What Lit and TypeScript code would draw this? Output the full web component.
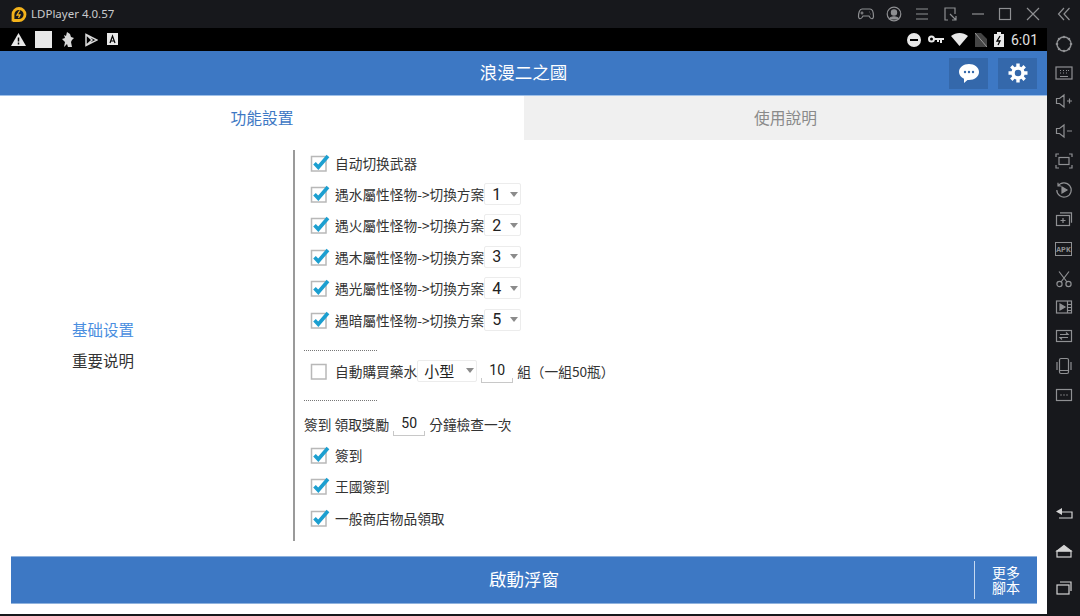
import { LitElement, html, css, svg } from "lit";
import { customElement } from "lit/decorators.js";

const ic = (body: unknown, w = 18, h = 18, vb = "0 0 18 18") =>
  html`<svg width=${w} height=${h} viewBox=${vb} fill="none" stroke="currentColor" stroke-width="1.2">${body}</svg>`;

const CHECK = html`<svg class="cb" width="24" height="20" viewBox="0 0 24 20">
  <rect x="1.500" y="3.500" width="14.500" height="14.500" fill="#fff" stroke="#b8b8b8" stroke-width="1.500" />
  <path d="M4.500 10.200l3.800 4L18 3" fill="none" stroke="#1c9fd0" stroke-width="3.600" />
</svg>`;
const UNCHECK = html`<svg class="cb" width="24" height="20" viewBox="0 0 24 20">
  <rect x="1.500" y="3.500" width="14.500" height="14.500" fill="#fff" stroke="#b8b8b8" stroke-width="1.500" />
</svg>`;

const sideIcons = [
  [31, ic(svg`<circle cx="9" cy="9" r="7" stroke-width="1.400"/><g fill="currentColor" stroke="none"><circle cx="9" cy="2" r="1.300"/><circle cx="9" cy="16" r="1.300"/><circle cx="2" cy="9" r="1.300"/><circle cx="16" cy="9" r="1.300"/><circle cx="4.050" cy="4.050" r="1.300"/><circle cx="13.950" cy="4.050" r="1.300"/><circle cx="4.050" cy="13.950" r="1.300"/><circle cx="13.950" cy="13.950" r="1.300"/></g>`)],
  [27, ic(svg`<rect x="1" y="3" width="16" height="12"/><path d="M5 6.500h1M8 6.500h1M11 6.500h1M14 6.500h-1M5 9h1M8 9h1M11 9h1M5 12.500h8"/>`)],
  [30, ic(svg`<path d="M1.500 6.500h3L9 3v12l-4.500-3.500h-3zM12 9h5M14.500 6.500v5"/>`)],
  [30, ic(svg`<path d="M1.500 6.500h3L9 3v12l-4.500-3.500h-3zM12 9h5"/>`)],
  [29, ic(svg`<rect x="4" y="5.500" width="10" height="7"/><path d="M1 5V2h3M14 2h3v3M1 13v3h3M14 16h3v-3"/>`)],
  [30, ic(svg`<path d="M3 5a7.200 7.200 0 1 1-1.200 4M3 1.800V5h3.200"/><path d="M7 6l5 3-5 3z" fill="currentColor"/>`)],
  [29, ic(svg`<rect x="1.500" y="4.500" width="13" height="10"/><path d="M5 1.800h11.500v10M8 7v5M5.500 9.500h5"/>`)],
  [30, html`<span class="apk">APK</span>`],
  [29, ic(svg`<circle cx="4.500" cy="14" r="2.600"/><circle cx="13.500" cy="14" r="2.600"/><path d="M6 12L14 1.500M12 12L4 1.500"/>`)],
  [28, ic(svg`<rect x="1.500" y="3" width="15" height="12"/><path d="M12.500 3v12M12.500 6.500h4M12.500 9.500h4M12.500 12.500h4"/><path d="M5 6l5 3-5 3z" fill="currentColor"/>`)],
  [30, ic(svg`<rect x="1.500" y="3.500" width="15" height="11"/><path d="M5 7.500h8l-2-2M13 10.500H5l2 2"/>`)],
  [29, ic(svg`<rect x="4.500" y="1.500" width="9" height="15" rx="1.500"/><path d="M2 5v8M16 5v8M4.500 13.500h9"/>`)],
  [30, ic(svg`<rect x="1.500" y="3.500" width="15" height="11"/><path d="M5.500 9h1M8.500 9h1M11.500 9h1" stroke-width="1.500"/>`)],
];

@customElement("app-root")
export class AppRoot extends LitElement {
  static styles = css`
    :host { display: block; width: 1080px; height: 616px; overflow: hidden; background: #17181c; font-family: "Noto Sans CJK TC", "Noto Sans", sans-serif; }
    * { box-sizing: border-box; }
    .title { height: 28px; display: flex; align-items: center; padding-left: 10px; color: #c9cacc; font: 11.500px/28px "Noto Sans", sans-serif; }
    .logo { margin-right: 4px; }
    .tools { margin-left: auto; display: flex; align-items: center; color: #8e8f92; }
    .tools span { width: 27.800px; display: flex; justify-content: center; }
    .tools .collapse { width: 33px; }
    .main { display: flex; height: 588px; }
    .screen { width: 1047px; display: flex; flex-direction: column; background: #fff; height: 586px; }
    .status { height: 23px; background: #000; display: flex; align-items: center; padding: 0 9px 0 11px; color: #e8e8e8; gap: 9px; flex: none; }
    .status .time { font: 14px "Roboto", sans-serif; color: #e2e2e2; }
    .status .right { margin-left: auto; display: flex; align-items: center; gap: 7px; }
    .square { width: 17px; height: 17px; background: #e8e8e8; }
    .appbar { height: 44px; flex: none; background: #3d78c4; position: relative; display: flex; align-items: center; justify-content: flex-end; gap: 10px; padding-right: 10px; color: #fff; }
    .appbar .name { position: absolute; left: 0; right: 0; text-align: center; font-size: 17.500px; line-height: 42px; top: 0; }
    .iconbtn { width: 39px; height: 31px; background: #3468ab; display: flex; align-items: center; justify-content: center; position: relative; }
    .tabs { display: flex; height: 45px; flex: none; border-top: 1px solid #9fc0e8; font-size: 15.750px; line-height: 44px; text-align: center; }
    .tab { flex: none; width: 524px; color: #3d78c4; background: #fff; }
    .tab.off { flex: 1; color: #8a8a8a; background: #f0f0f0; }
    .content { flex: 1; display: flex; min-height: 0; padding-top: 10px; }
    .nav { width: 293px; flex: none; display: flex; flex-direction: column; justify-content: center; padding: 0 0 2px 72px; font-size: 15.500px; gap: 9px; color: #333; line-height: 22px; height: 391px; }
    .nav .on { color: #4a8ee0; }
    .panel { width: 500px; height: 391px; border-left: 2px solid #9a9a9a; overflow: hidden; padding-left: 9px; font-size: 13.700px; color: #333; }
    .rows { margin-top: -3px; }
    .row { height: 31.400px; display: flex; align-items: center; white-space: nowrap; }
    .cb { flex: none; margin-left: 6px; margin-right: 1px; }
    .sel { display: inline-flex; align-items: center; justify-content: space-between; width: 37px; height: 22px; border: 1px solid #ececec; border-radius: 2px; padding: 0 2px 0 7px; font: 16px "Roboto", sans-serif; color: #222; }
    .sel.wide { width: 60px; font: 15px "Noto Sans CJK TC", sans-serif; padding-left: 6px; }
    .arrow { width: 0; height: 0; border: 4px solid transparent; border-top: 5px solid #8b8b8b; border-bottom: 0; }
    .num { display: inline-block; width: 32px; height: 24px; text-align: center; font: 14px/22px "Roboto", sans-serif; color: #222; margin: 0 4px;
      border-bottom: 1px solid #c8c8c8;
      background: linear-gradient(#c8c8c8, #c8c8c8) left bottom / 1px 4px no-repeat, linear-gradient(#c8c8c8, #c8c8c8) right bottom / 1px 4px no-repeat; }
    .dots { height: 19.600px; padding-top: 15px; }
    .dots.second { height: 21.600px; padding-top: 14px; }
    .dots i { display: block; width: 73px; border-top: 1px dotted #777; }
    .bottom { height: 61px; flex: none; padding: 3px 10px 0 11px; }
    .start { height: 48px; background: #3d78c4; border-top: 1px solid #8fb2dd; border-bottom: 1px solid #8fb2dd; display: flex; align-items: center; color: #fff; }
    .start .label { flex: 1; text-align: center; font-size: 17.500px; line-height: 24px; padding: 0 0 3px 63px; }
    .more { width: 63px; height: 38px; border-left: 1px solid #c5d8f0; text-align: center; font-size: 14px; line-height: 15px; padding: 4px 0 0 0; }
    .side { width: 33px; display: flex; flex-direction: column; align-items: center; color: #8f9093; padding-bottom: 10px; }
    .side span { display: flex; align-items: center; justify-content: center; width: 33px; flex: none; }
    .side .apk { font: 700 8px "Liberation Mono", monospace; border: 1px solid #8f9093; width: 17px; height: 14px; }
    .side .gap { flex: 1; }
    .side .nb { height: 36.500px; color: #d4d4d4; }
  `;

  private opt(label: string, n: string) {
    return html`<div class="row">${CHECK}<span>${label}</span><span class="sel">${n}<i class="arrow"></i></span></div>`;
  }

  render() {
    return html`
      <div class="title">
        <svg class="logo" width="17" height="17" viewBox="0 0 17 17" fill="none">
          <path d="M3 15.500V8.500a6 6 0 1 1 6 6H3" stroke="#f3b21b" stroke-width="2.800" />
          <path d="M9.800 4.500L7 9h3l-1.500 3" stroke="#f3b21b" stroke-width="1.300" />
        </svg>
        <span>LDPlayer 4.0.57</span>
        <div class="tools">
          <span>${ic(svg`<path d="M5 4h8c2.500 0 3.500 4 3.500 7.500 0 2.500-2 3-3.500 1l-1-1.500H6l-1 1.500c-1.500 2-3.500 1.500-3.500-1C1.500 8 2.500 4 5 4zM5 6.500v3M3.500 8h3M12 7h.5M13.500 9h.5"/>`)}</span>
          <span>${ic(svg`<circle cx="9" cy="9" r="6.800"/><circle cx="9" cy="7.500" r="2.600" fill="currentColor"/><path d="M4.500 14c1-3 8-3 9 0z" fill="currentColor"/>`)}</span>
          <span>${ic(svg`<path d="M3 4h12M3 9h12M3 14h12"/>`)}</span>
          <span>${ic(svg`<path d="M7 15H4V3h10v6M9 9l6 6M15 11v4h-4"/>`)}</span>
          <span>${ic(svg`<path d="M3 9h12"/>`)}</span>
          <span>${ic(svg`<rect x="3.500" y="3.500" width="11" height="11"/>`)}</span>
          <span>${ic(svg`<path d="M3 3l12 12M15 3L3 15"/>`)}</span>
          <span class="collapse">${ic(svg`<path d="M9 3L3.500 9 9 15M14.500 3L9 9l5.500 6"/>`)}</span>
        </div>
      </div>
      <div class="main">
        <div class="screen">
          <div class="status">
            <svg width="15" height="13" viewBox="0 0 15 13"><path d="M7.500 0L15 13H0z" fill="#e8e8e8" /><path d="M7.500 4.500v4M7.500 9.500v2" stroke="#000" stroke-width="1.500" /></svg>
            <div class="square"></div>
            <svg width="14" height="16" viewBox="0 0 14 16" fill="#d8d8d8"><path d="M6 0l3 2 1 3 3 1-2 2-1 2 1 5H7L6 12 3 15l1-5-3-3 3-1-1-3 2 1z" /></svg>
            <svg width="14" height="14" viewBox="0 0 14 14" fill="none" stroke="#d8d8d8" stroke-width="1.500"><path d="M2 1.500l11 5.500-11 5.500zM2 1.500l6 5.500-6 5.500" /></svg>
            <svg width="12" height="13" viewBox="0 0 12 13"><rect width="11" height="12" fill="#e8e8e8" /><path d="M3 10l2.500-7 2.500 7M4 8h3" stroke="#000" fill="none" stroke-width="1.200" /></svg>
            <div class="right">
              <svg width="14" height="14" viewBox="0 0 14 14"><circle cx="7" cy="7" r="7" fill="#e8e8e8" /><path d="M3 7h8" stroke="#000" stroke-width="2" /></svg>
              <svg width="16" height="10" viewBox="0 0 16 10" fill="none" stroke="#e8e8e8" stroke-width="2"><circle cx="3.500" cy="4" r="2.500" /><path d="M6 4h10M13 4v4M10 4v3" /></svg>
              <svg width="17" height="13" viewBox="0 0 17 13"><path d="M0 3c5-4 12-4 17 0l-8.500 10z" fill="#e8e8e8" /></svg>
              <svg width="12" height="14" viewBox="0 0 12 14"><path d="M0 14V0h6l6 6v8z" fill="#444" /><path d="M0 0l12 14" stroke="#999" /></svg>
              <svg width="10" height="15" viewBox="0 0 10 15"><path d="M3 0h4v2h3v13H0V2h3z" fill="#e8e8e8" /><path d="M6 4L3 9h3l-2 4" stroke="#000" fill="none" stroke-width="1.300" /></svg>
              <span class="time">6:01</span>
            </div>
          </div>
          <div class="appbar">
            <span class="name">浪漫二之國</span>
            <div class="iconbtn">
              <svg width="22" height="21" viewBox="0 0 22 21"><path d="M11 1c5.500 0 10 3.500 10 8s-4.500 8-10 8c-.5 0-1 0-1.500-.1L6 20v-4.200C3 14.300 1 12 1 9c0-4.500 4.500-8 10-8z" fill="#fff" /><g fill="#3468ab"><circle cx="7" cy="9" r="1.200" /><circle cx="11" cy="9" r="1.200" /><circle cx="15" cy="9" r="1.200" /></g></svg>
            </div>
            <div class="iconbtn">
              <svg width="20" height="20" viewBox="0 0 20 20" fill="none" stroke="#fff"><circle cx="10" cy="10" r="5" stroke-width="3.500" /><path d="M10 0.500v4M10 15.500v4M0.500 10h4M15.500 10h4M3.300 3.300l2.800 2.800M13.900 13.900l2.800 2.800M3.300 16.700l2.800-2.800M13.900 6.100l2.800-2.800" stroke-width="3.400" /></svg>
            </div>
          </div>
          <div class="tabs">
            <div class="tab">功能設置</div>
            <div class="tab off">使用說明</div>
          </div>
          <div class="content">
            <div class="nav"><span class="on">基础设置</span><span>重要说明</span></div>
            <div class="panel">
              <div class="rows">
                <div class="row">${CHECK}<span>自动切换武器</span></div>
                ${this.opt("遇水屬性怪物->切換方案", "1")}
                ${this.opt("遇火屬性怪物->切換方案", "2")}
                ${this.opt("遇木屬性怪物->切換方案", "3")}
                ${this.opt("遇光屬性怪物->切換方案", "4")}
                ${this.opt("遇暗屬性怪物->切換方案", "5")}
                <div class="dots"><i></i></div>
                <div class="row">${UNCHECK}<span>自動購買藥水</span><span class="sel wide">小型<i class="arrow"></i></span><span class="num">10</span><span>組（一組50瓶）</span></div>
                <div class="dots second"><i></i></div>
                <div class="row"><span>簽到 領取獎勵</span><span class="num">50</span><span>分鐘檢查一次</span></div>
                <div class="row">${CHECK}<span>簽到</span></div>
                <div class="row">${CHECK}<span>王國簽到</span></div>
                <div class="row">${CHECK}<span>一般商店物品領取</span></div>
              </div>
            </div>
          </div>
          <div class="bottom">
            <div class="start"><span class="label">啟動浮窗</span><div class="more">更多<br />腳本</div></div>
          </div>
        </div>
        <div class="side">
          ${sideIcons.map(([h, i]) => html`<span style="height:${h}px">${i}</span>`)}
          <div class="gap"></div>
          <span class="nb">${ic(svg`<path d="M6 6h11v6H4"/><path d="M1 5.500L7 2v7z" fill="currentColor" stroke="none"/>`)}</span>
          <span class="nb">${ic(svg`<path d="M2 9L9 3.500 16 9z" fill="currentColor"/><rect x="2" y="9" width="14" height="6"/>`)}</span>
          <span class="nb">${ic(svg`<rect x="2" y="6" width="12" height="9"/><path d="M5 3h11v9"/>`)}</span>
        </div>
      </div>
    `;
  }
}
